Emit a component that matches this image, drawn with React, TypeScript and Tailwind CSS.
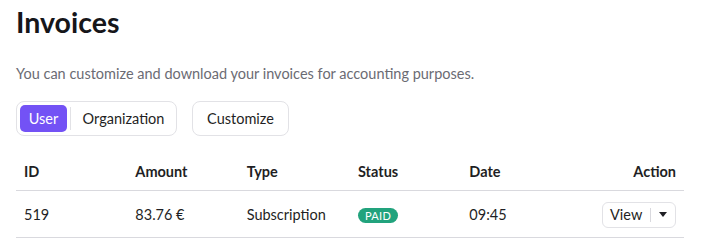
import React from 'react';

const columns = ['ID', 'Amount', 'Type', 'Status', 'Date'];

const App = () => {
  return (
    <div className="w-[702px] h-[247px] bg-white px-4 overflow-hidden text-[#1f1f24]" style={{ fontFamily: 'Lato, "Open Sans", sans-serif' }}>
      {/* Header */}
      <h1 className="pt-[4px] text-[28.5px] leading-[36px] font-bold text-[#16161a]">Invoices</h1>
      <p className="mt-[24px] text-[14.5px] leading-[20px] text-[#6b6b73]">
        You can customize and download your invoices for accounting purposes.
      </p>

      {/* Controls */}
      <div className="mt-[17px] flex items-center gap-[15px]">
        <div className="flex items-center h-[35px] w-[161px] rounded-lg border border-[#e2e2e6] px-[3px]">
          <button className="h-[27px] w-[47px] rounded-[5px] bg-[#7352f5] text-white text-[14.5px]">User</button>
          <span className="mx-[3px] h-[23px] w-px bg-[#e2e2e6]" />
          <button className="flex-1 h-[27px] text-[14.5px] text-[#1f1f24]">Organization</button>
        </div>
        <button className="h-[35px] w-[97px] rounded-lg border border-[#e2e2e6] text-[14.5px] text-[#1f1f24]">Customize</button>
      </div>

      {/* Table */}
      <table className="mt-[18px] w-[668px] table-fixed border-collapse text-[14.5px]">
        <thead>
          <tr className="h-[36px] border-b border-[#d9d9de]">
            {columns.map(c => (
              <th key={c} className="px-2 text-left font-bold text-[#1f1f24]">{c}</th>
            ))}
            <th className="px-2 text-right font-bold text-[#1f1f24]">Action</th>
          </tr>
        </thead>
        <tbody>
          <tr className="h-[47px] border-b border-[#d9d9de]">
            <td className="px-2 pt-[2px]">519</td>
            <td className="px-2 pt-[2px]">83.76 €</td>
            <td className="px-2 pt-[2px]">Subscription</td>
            <td className="px-2 pt-[2px]">
              <span className="inline-flex items-center h-[15px] rounded-full bg-[#22a37d] px-[7px] text-[11px] tracking-wide text-white">PAID</span>
            </td>
            <td className="px-2 pt-[2px]">09:45</td>
            <td className="px-2 pt-[2px] text-right">
              <div className="inline-flex items-center h-[26px] w-[74px] rounded-md border border-[#e2e2e6] pl-[7px] pr-[8px]">
                <span>View</span>
                <span className="ml-[8px] h-[14px] w-px bg-[#d9d9de]" />
                <svg className="ml-auto" width="8" height="5" viewBox="0 0 8 5">
                  <path d="M0 0 L8 0 L4 5 Z" fill="#1f1f24" />
                </svg>
              </div>
            </td>
          </tr>
        </tbody>
      </table>
    </div>
  );
};

export default App;
